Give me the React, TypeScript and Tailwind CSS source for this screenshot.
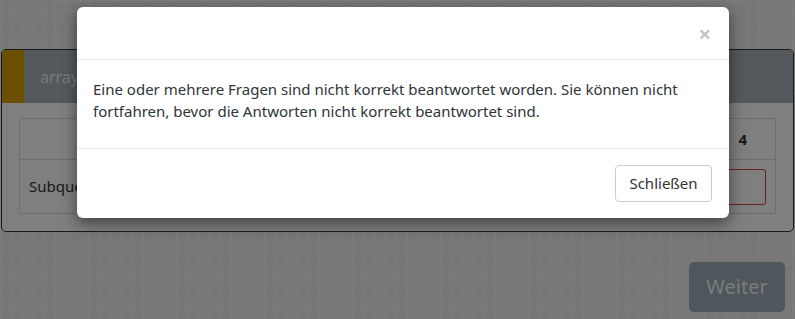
export default function App() {
  return (
    <div
      className="relative h-[319px] w-[795px] overflow-hidden bg-[#eeeeee] bg-[linear-gradient(to_right,#f8f8f8_1px,transparent_1px),linear-gradient(to_bottom,#f8f8f8_1px,transparent_1px)] bg-[size:11px_11px] text-[#333] [font-family:'Noto_Sans','Open_Sans',sans-serif]"
    >
      {/* page under the dialog */}
      <div className="px-[1px] pt-[49px]">
        <div className="overflow-hidden rounded-[5px] border border-[#333] bg-white">
          <div className="flex h-[53px] bg-[#a6b3bb]">
            <div className="w-[22px] bg-[#d7a100]" />
            <div className="pl-[16px] pt-[15px] text-[16px] text-[#f2f4f5]">array</div>
          </div>
          <div className="px-[17px] pb-[17px] pt-[15px]">
            <table className="w-full table-fixed border-collapse text-[15px]">
              <tbody>
                <tr className="h-[41px]">
                  <td className="border border-[#dddddd]" />
                  <td className="w-[77px] border border-[#dddddd] pr-[28px] text-right font-bold">4</td>
                </tr>
                <tr className="h-[54px]">
                  <td className="border border-[#dddddd] pl-[9px]">Subquestion</td>
                  <td className="border border-[#dddddd] px-[9px]">
                    <div className="h-[36px] w-[58px] rounded-[3px] border border-[#d64541]" />
                  </td>
                </tr>
              </tbody>
            </table>
          </div>
        </div>
        <div className="flex justify-end pr-[9px] pt-[30px]">
          <button className="h-[50px] w-[96px] rounded-[5px] bg-[#9daeb6] text-[20px] text-[#f5f7f8]">
            Weiter
          </button>
        </div>
      </div>

      {/* backdrop */}
      <div className="absolute inset-0 bg-black/50" />

      {/* dialog */}
      <div className="absolute left-[77px] top-[7px] w-[652px] rounded-[6px] bg-white shadow-[0_5px_15px_rgba(0,0,0,0.5)]">
        <div className="flex h-[53px] items-center justify-end border-b border-[#e5e5e5] pr-[18px]">
          <span className="text-[22px] font-bold leading-none text-[#c4c4c4]">×</span>
        </div>
        <div className="px-[16px] pb-[26px] pt-[18px] text-[15px] leading-[22px] text-[#2f3437]">
          Eine oder mehrere Fragen sind nicht korrekt beantwortet worden. Sie können nicht fortfahren, bevor die Antworten nicht korrekt beantwortet sind.
        </div>
        <div className="flex justify-end border-t border-[#e5e5e5] px-[17px] pb-[16px] pt-[16px]">
          <button className="h-[37px] w-[97px] rounded-[4px] border border-[#cccccc] bg-white text-[15px] text-[#333]">
            Schließen
          </button>
        </div>
      </div>
    </div>
  );
}
